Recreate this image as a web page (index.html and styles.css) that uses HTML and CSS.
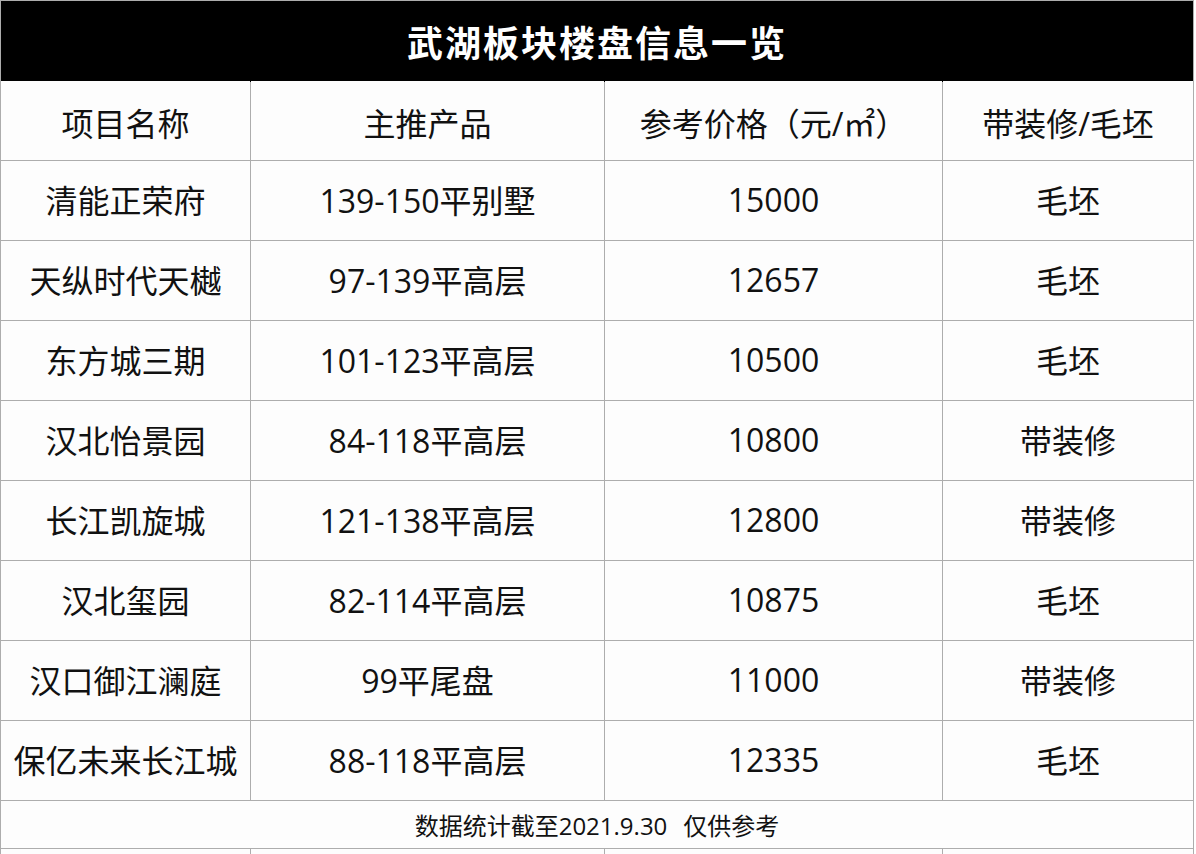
FILE: index.html
```html
<!DOCTYPE html>
<html lang="zh-CN">
<head>
<meta charset="utf-8">
<title>武湖板块楼盘信息一览</title>
<link rel="stylesheet" href="styles.css">
</head>
<body>
<div class="sheet">
  <div class="title">武湖板块楼盘信息一览</div>
  <div class="cell head">项目名称</div>
  <div class="cell head">主推产品</div>
  <div class="cell head">参考价格（元/㎡）</div>
  <div class="cell head">带装修/毛坯</div>

  <div class="cell">清能正荣府</div>
  <div class="cell">139-150平别墅</div>
  <div class="cell">15000</div>
  <div class="cell">毛坯</div>

  <div class="cell">天纵时代天樾</div>
  <div class="cell">97-139平高层</div>
  <div class="cell">12657</div>
  <div class="cell">毛坯</div>

  <div class="cell">东方城三期</div>
  <div class="cell">101-123平高层</div>
  <div class="cell">10500</div>
  <div class="cell">毛坯</div>

  <div class="cell">汉北怡景园</div>
  <div class="cell">84-118平高层</div>
  <div class="cell">10800</div>
  <div class="cell">带装修</div>

  <div class="cell">长江凯旋城</div>
  <div class="cell">121-138平高层</div>
  <div class="cell">12800</div>
  <div class="cell">带装修</div>

  <div class="cell">汉北玺园</div>
  <div class="cell">82-114平高层</div>
  <div class="cell">10875</div>
  <div class="cell">毛坯</div>

  <div class="cell">汉口御江澜庭</div>
  <div class="cell">99平尾盘</div>
  <div class="cell">11000</div>
  <div class="cell">带装修</div>

  <div class="cell">保亿未来长江城</div>
  <div class="cell">88-118平高层</div>
  <div class="cell">12335</div>
  <div class="cell">毛坯</div>

  <div class="note">数据统计截至2021.9.30<span class="gap"></span>仅供参考</div>

  <div class="cell blank"></div>
  <div class="cell blank"></div>
  <div class="cell blank"></div>
  <div class="cell blank"></div>
</div>
</body>
</html>
```

FILE: styles.css
```css
html, body {
  margin: 0;
  padding: 0;
  background: #ffffff;
  height: 854px;
  overflow: hidden;
}

.sheet {
  width: 1194px;
  box-sizing: border-box;
  padding: 1px;
  background: #adadad;
  display: grid;
  grid-template-columns: 249px 353px 337px 250px;
  grid-template-rows: 79px repeat(9, 79px) 47px 79px;
  gap: 1px;
  font-family: "Open Sans", "Noto Sans CJK SC", sans-serif;
  color: #111111;
}

.title {
  grid-column: 1 / -1;
  height: 81px;
  background: #000000;
  color: #ffffff;
  font-family: "Noto Sans CJK SC", sans-serif;
  font-weight: 700;
  font-size: 36px;
  letter-spacing: 2px;
  display: flex;
  align-items: center;
  justify-content: center;
  padding-bottom: 2px;
  box-sizing: border-box;
}

.cell {
  background: #fdfdfd;
  font-size: 32px;
  display: flex;
  align-items: center;
  justify-content: center;
  white-space: nowrap;
  padding-bottom: 3px;
  box-sizing: border-box;
}

.cell.head {
  padding-top: 2px;
  padding-bottom: 0;
}

.note {
  grid-column: 1 / -1;
  background: #fdfdfd;
  font-size: 24px;
  display: flex;
  align-items: center;
  justify-content: center;
  white-space: nowrap;
}

.gap {
  display: inline-block;
  width: 16px;
}
```
